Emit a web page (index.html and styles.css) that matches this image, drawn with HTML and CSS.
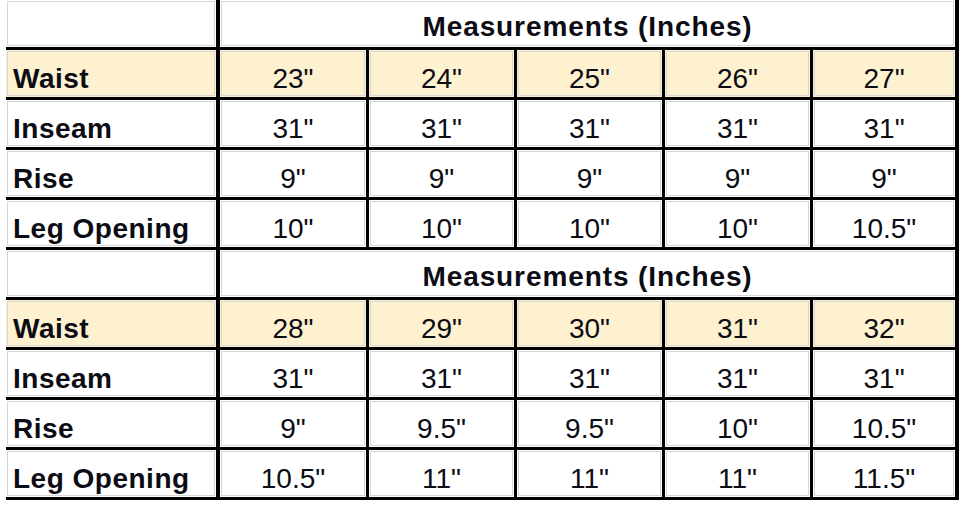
FILE: index.html
```html
<!DOCTYPE html>
<html lang="en">
<head>
<meta charset="utf-8">
<title>Measurements (Inches)</title>
<link rel="stylesheet" href="styles.css">
</head>
<body>
<table class="chart">
  <colgroup>
    <col class="c-label"><col class="c-d1"><col class="c-d"><col class="c-d"><col class="c-d"><col class="c-last">
  </colgroup>
  <tbody>
    <tr class="head">
      <td class="label"></td>
      <td class="title last" colspan="5">Measurements (Inches)</td>
    </tr>
    <tr class="waist">
      <td class="label">Waist</td>
      <td>23"</td><td>24"</td><td>25"</td><td>26"</td><td class="last">27"</td>
    </tr>
    <tr>
      <td class="label">Inseam</td>
      <td>31"</td><td>31"</td><td>31"</td><td>31"</td><td class="last">31"</td>
    </tr>
    <tr>
      <td class="label">Rise</td>
      <td>9"</td><td>9"</td><td>9"</td><td>9"</td><td class="last">9"</td>
    </tr>
    <tr>
      <td class="label">Leg Opening</td>
      <td>10"</td><td>10"</td><td>10"</td><td>10"</td><td class="last">10.5"</td>
    </tr>
    <tr class="head">
      <td class="label"></td>
      <td class="title last" colspan="5">Measurements (Inches)</td>
    </tr>
    <tr class="waist">
      <td class="label">Waist</td>
      <td>28"</td><td>29"</td><td>30"</td><td>31"</td><td class="last">32"</td>
    </tr>
    <tr>
      <td class="label">Inseam</td>
      <td>31"</td><td>31"</td><td>31"</td><td>31"</td><td class="last">31"</td>
    </tr>
    <tr>
      <td class="label">Rise</td>
      <td>9"</td><td>9.5"</td><td>9.5"</td><td>10"</td><td class="last">10.5"</td>
    </tr>
    <tr>
      <td class="label">Leg Opening</td>
      <td>10.5"</td><td>11"</td><td>11"</td><td>11"</td><td class="last">11.5"</td>
    </tr>
  </tbody>
</table>
</body>
</html>
```

FILE: styles.css
```css
html, body {
  margin: 0;
  padding: 0;
  background: #ffffff;
}

body {
  font-family: "Liberation Sans", Arial, sans-serif;
  color: #0c0c14;
}

.chart {
  margin-left: 6px;
  border-collapse: separate;
  border-spacing: 0;
  table-layout: fixed;
  width: 953px;
}

.c-label { width: 214px; }
.c-d1 { width: 149px; }
.c-d { width: 148px; }
.c-last { width: 146px; }

.chart tr {
  height: 50px;
}

.chart td {
  --bg: #ffffff;
  box-sizing: border-box;
  height: 50px;
  padding: 0 0 2px 0;
  background: var(--bg);
  border-right: 3px solid #000;
  border-bottom: 3px solid #000;
  box-shadow: inset 0 0 0 1px var(--bg), inset 0 0 0 2px #d6d6d6;
  vertical-align: bottom;
  text-align: center;
  font-size: 28px;
  line-height: 32px;
  white-space: nowrap;
}

.chart td.label {
  border-right-width: 4px;
  text-align: left;
  padding-left: 7px;
  font-weight: bold;
  letter-spacing: 0.5px;
}

.chart td.last {
  border-right-width: 4px;
}

.chart tr.waist td {
  --bg: #fdf1cf;
}

.chart td.title {
  font-weight: bold;
  letter-spacing: 0.9px;
  padding-bottom: 4px;
}
```
